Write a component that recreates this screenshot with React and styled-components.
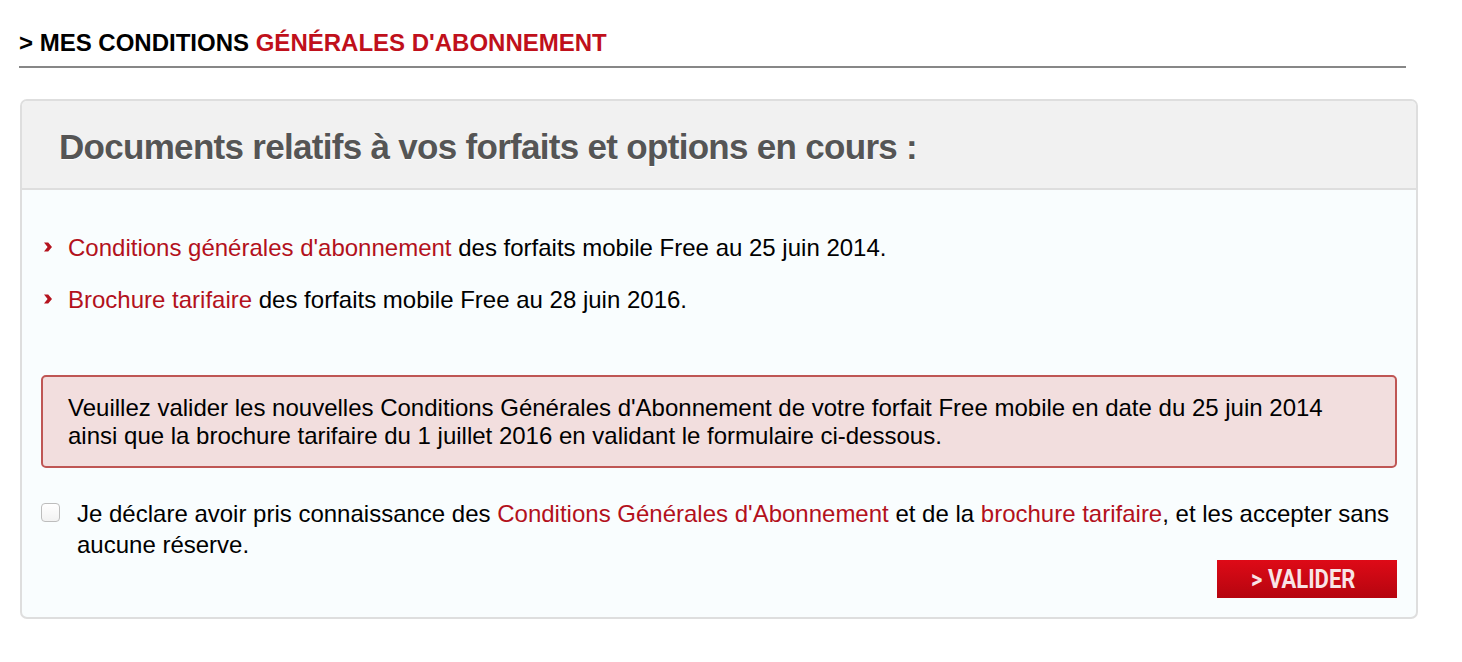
import React from 'react'
import styled, { createGlobalStyle } from 'styled-components'

const GlobalStyle = createGlobalStyle`
    body {
        margin: 0;
        background: #ffffff;
        font-family: "Liberation Sans", Arial, sans-serif;
        color: #000;
    }
`

function Chevron() {
    return (
        <svg width="8" height="10" viewBox="0 0 8 10">
            <path d="M0 0.5 L4.2 0.5 L8 5 L4.2 9.5 L0 9.5 L3.6 5 Z" fill="#b5141f" />
        </svg>
    )
}

function App() {
    return (
        <Page>
            <GlobalStyle />
            <Title>
                <span>&gt; MES CONDITIONS </span>
                <Red>GÉNÉRALES D'ABONNEMENT</Red>
            </Title>
            <Card>
                <CardHeader>
                    <h2>Documents relatifs à vos forfaits et options en cours :</h2>
                </CardHeader>
                <CardBody>
                    <DocList>
                        <DocItem>
                            <Chevron />
                            <span><Link>Conditions générales d'abonnement</Link> des forfaits mobile Free au 25 juin 2014.</span>
                        </DocItem>
                        <DocItem>
                            <Chevron />
                            <span><Link>Brochure tarifaire</Link> des forfaits mobile Free au 28 juin 2016.</span>
                        </DocItem>
                    </DocList>
                    <Alert>
                        Veuillez valider les nouvelles Conditions Générales d'Abonnement de votre forfait Free mobile en date du 25 juin 2014<br />
                        ainsi que la brochure tarifaire du 1 juillet 2016 en validant le formulaire ci-dessous.
                    </Alert>
                    <Accept>
                        <Check type="checkbox" />
                        <AcceptText>
                            Je déclare avoir pris connaissance des <Link>Conditions Générales d'Abonnement</Link> et de la <Link>brochure tarifaire</Link>, et les accepter sans aucune réserve.
                        </AcceptText>
                    </Accept>
                    <Actions>
                        <ValidBtn><span>&gt; VALIDER</span></ValidBtn>
                    </Actions>
                </CardBody>
            </Card>
        </Page>
    )
}

export default App

const Page = styled.div`
    padding: 29px 0 40px 19px;
    width: 1399px;
`

const Title = styled.h1`
    margin: 0;
    width: 1387px;
    font-size: 24px;
    font-weight: bold;
    line-height: 28px;
    padding-bottom: 9px;
    border-bottom: 2px solid #878787;
`

const Red = styled.span`
    color: #c0101b;
`

const Card = styled.div`
    margin: 31px 0 0 1px;
    width: 1398px;
    box-sizing: border-box;
    border: 2px solid #dedede;
    border-radius: 7px;
    overflow: hidden;
    background: #f9fdfe;
`

const CardHeader = styled.div`
    background: #f1f1f1;
    height: 87px;
    border-bottom: 2px solid #dedede;
    display: flex;
    align-items: center;
    padding-left: 37px;

    h2 {
        margin: 0;
        font-size: 35px;
        font-weight: bold;
        color: #555555;
        letter-spacing: -0.7px;
        text-shadow: 0 1px 0 #fff;
        padding-top: 4px;
    }
`

const CardBody = styled.div`
    padding: 44px 19px 19px 19px;
`

const DocList = styled.ul`
    list-style: none;
    margin: 0;
    padding: 0 0 0 3px;
    display: flex;
    flex-direction: column;
    gap: 24px;
`

const DocItem = styled.li`
    display: flex;
    align-items: center;
    gap: 16px;
    font-size: 24px;
    line-height: 28px;

    svg {
        flex: none;
        margin-top: -2px;
    }
`

const Link = styled.span`
    color: #b3111c;
`

const Alert = styled.div`
    margin-top: 61px;
    background: #f2dede;
    border: 2px solid #bf5654;
    border-radius: 5px;
    padding: 17px 25px 16px 25px;
    font-size: 24px;
    line-height: 28px;
`

const Accept = styled.label`
    margin-top: 30px;
    display: grid;
    grid-template-columns: 19px 1fr;
    column-gap: 17px;
    align-items: start;
`

const AcceptText = styled.p`
    margin: 0;
    font-size: 24px;
    line-height: 31px;
`

const Check = styled.input`
    appearance: none;
    margin: 5px 0 0 0;
    width: 19px;
    height: 19px;
    border: 1px solid #bdbdbd;
    border-radius: 4px;
    background: linear-gradient(#ffffff, #f2f2f2);
`

const Actions = styled.div`
    display: flex;
    justify-content: flex-end;
`

const ValidBtn = styled.button`
    width: 180px;
    height: 38px;
    border: none;
    background: linear-gradient(#de0a17, #b5050f);
    color: #f8e4e6;
    font-family: Roboto, "Liberation Sans", sans-serif;
    font-weight: bold;
    font-size: 25px;
    padding: 0 8px 0 0;
    display: flex;
    align-items: center;
    justify-content: center;
    cursor: pointer;

    span {
        display: inline-block;
        transform: scaleX(0.88);
    }
`
